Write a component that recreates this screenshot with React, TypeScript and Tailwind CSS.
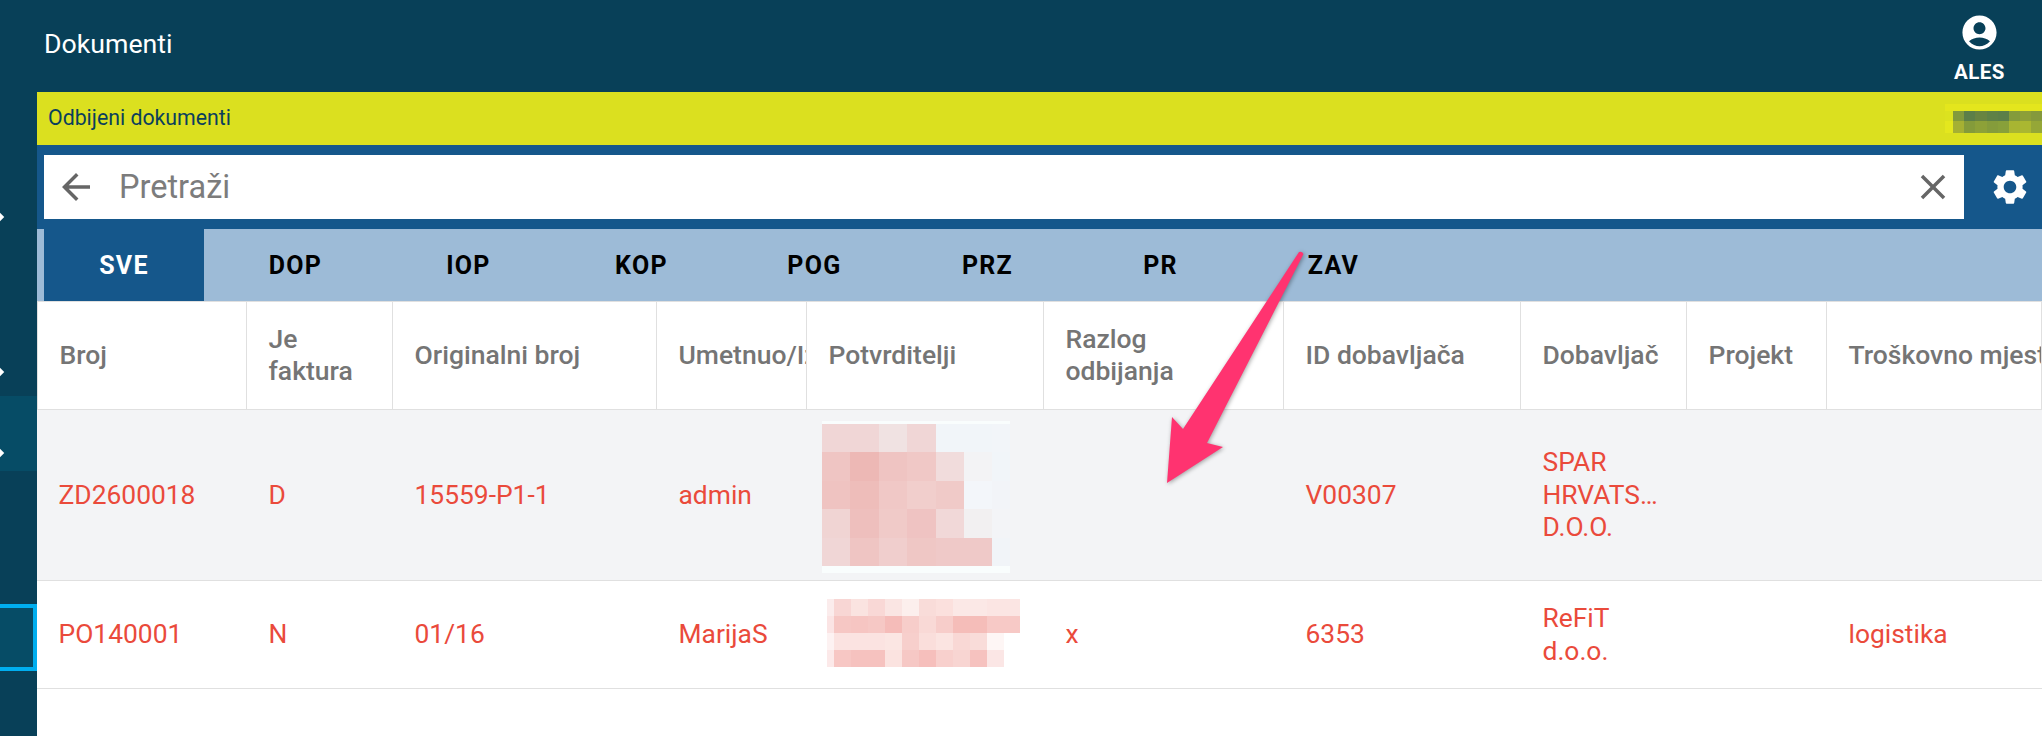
import type { ReactNode } from "react";
import { MdAccountCircle, MdArrowBack, MdClose, MdSettings } from "react-icons/md";

const gridCols =
    "grid grid-cols-[210px_146px_264px_150px_237px_240px_237px_166px_140px_215px]";

const tabs = ["DOP", "IOP", "KOP", "POG", "PRZ", "PR", "ZAV"];

const headers = [
    "Broj",
    "Je faktura",
    "Originalni broj",
    "Umetnuo/Izmijenio",
    "Potvrditelji",
    "Razlog odbijanja",
    "ID dobavljača",
    "Dobavljač",
    "Projekt",
    "Troškovno mjesto",
];

// blurred names, sampled per block
const mosaicOne = [
    ["#f0d6d6", "#f0d6d6", "#f0e2e2", "#f0d6d6", "#f1f5f9", "#f1f5f9", "#f2f5f9"],
    ["#efc5c3", "#edb8b5", "#efc4c2", "#f0c8c6", "#f1dcdc", "#f3f3f5", "#f1f5f9"],
    ["#efc3c1", "#eebdba", "#f0c8c6", "#f1cecc", "#f0cac8", "#f3f6fa", "#f2f4f8"],
    ["#f0d4d3", "#eebfbd", "#f0cac8", "#efc3c2", "#f1d8d8", "#f2f0f1", "#f3f4f7"],
    ["#f0d6d6", "#efc5c3", "#f0cecd", "#efc7c5", "#efc9c8", "#efc9c8", "#f1f4f8"],
];

const mosaicTwo = [
    ["#fbecec", "#f8d6d4", "#fae3e0", "#f9d8d6", "#fae5e3", "#fcefed", "#f9dcd9", "#fbe0dd", "#fbe8e6", "#fbe8e6", "#fbe5e3", "#fbe5e3"],
    ["#fbe4e4", "#f6c7c4", "#f6c5c2", "#f6c8c5", "#f5bcb9", "#f7cdca", "#f9d9d6", "#f7cdca", "#f5bdb9", "#f5bdb9", "#f7c9c6", "#f7c9c6"],
    ["#fdf2f2", "#fbe3e1", "#fbe3e1", "#fbe3e1", "#fbe6e3", "#f7cfcc", "#fadedb", "#fbe4e1", "#f9d8d5", "#f9dcd9", "#fef6f5", "#ffffff"],
    ["#fce9e9", "#f7c7c4", "#f6c2bf", "#f6c2bf", "#fbe3e0", "#f6c8c5", "#f6bfbc", "#f8d0cd", "#f8d5d2", "#f6c2bf", "#fbe6e5", "#ffffff"],
];

const mosaicYellow = [
    ["#dce21f", "#829a3c", "#5c7f48", "#688441", "#5f8146", "#5c7f48", "#849b3b", "#8d9f38", "#85993c"],
    ["#e4e71e", "#a5b033", "#849b3a", "#8da138", "#859c3b", "#88a03a", "#a8b532", "#aab731", "#95a737"],
];

function MosaicOne() {
    return (
        <svg width="188" height="152" shapeRendering="crispEdges" className="block">
            <rect width="188" height="152" fill="#f9fdfd" />
            {mosaicOne.map((row, y) =>
                row.map((color, x) => (
                    <rect
                        key={`${x}-${y}`}
                        x={x * 28.4}
                        y={3 + y * 28.4}
                        width={x === 6 ? 18 : 28.4}
                        height={28.4}
                        fill={color}
                    />
                ))
            )}
        </svg>
    );
}

function MosaicTwo() {
    return (
        <svg width="193" height="68" shapeRendering="crispEdges" className="block">
            <rect x="191" y="17" width="2" height="13" fill="#ea4335" />
            {mosaicTwo.map((row, y) =>
                row.map((color, x) => (
                    <rect
                        key={`${x}-${y}`}
                        x={x === 0 ? 0 : 7 + (x - 1) * 17}
                        y={y * 17}
                        width={x === 0 ? 7 : 17}
                        height={17}
                        fill={color}
                    />
                ))
            )}
        </svg>
    );
}

function MosaicYellow() {
    return (
        <svg width="97" height="29" shapeRendering="crispEdges" className="block">
            <rect width="97" height="7" fill="#e4e61d" />
            {mosaicYellow.map((row, y) =>
                row.map((color, x) => (
                    <rect
                        key={`${x}-${y}`}
                        x={x === 0 ? 0 : 8 + (x - 1) * 11.2}
                        y={y === 0 ? 7 : 17}
                        width={x === 0 ? 8 : 11.2}
                        height={y === 0 ? 10 : 12}
                        fill={color}
                    />
                ))
            )}
        </svg>
    );
}

function Dot() {
    return <div className="h-[6px] w-[6px] -ml-[3px] rotate-45 bg-white" />;
}

function Cell({ children }: { children?: ReactNode }) {
    return (
        <div className="flex min-w-0 items-center overflow-hidden px-[21.5px] text-[26.4px] leading-[32.5px] text-[#ea4a3b]">
            {children}
        </div>
    );
}

export default function App() {
    return (
        <div className="relative flex h-screen w-full flex-col overflow-hidden bg-white font-['Roboto',sans-serif]">
            <header className="flex h-[92px] shrink-0 items-start justify-between bg-[#084058] text-white">
                <h1 className="mt-[25px] ml-[44px] text-[26.7px] leading-[38px] font-normal">Dokumenti</h1>
                <div className="mr-[37px] flex flex-col items-center pt-[12px]">
                    <MdAccountCircle size={41} />
                    <span className="mt-[8px] text-[20.5px] leading-[22px] font-bold tracking-[0.5px]">ALES</span>
                </div>
            </header>

            <div className="flex min-h-0 flex-1">
                <aside className="flex w-[37px] shrink-0 flex-col bg-[#084058]">
                    <div className="mt-[122px]"><Dot /></div>
                    <div className="mt-[149px]"><Dot /></div>
                    <div className="mt-[21px] h-[75px] bg-[#064c66] pt-[54px]"><Dot /></div>
                    <div className="mt-[133px] h-[67px] border-y-[4px] border-r-[4px] border-[#00aeef] bg-[#064c66]" />
                </aside>

                <main className="min-w-0 flex-1">
                    <div className="flex h-[53px] items-center justify-between overflow-hidden bg-[#dbe01f]">
                        <span className="mb-[2px] ml-[11px] text-[21.3px] text-[#0b3f5c]">Odbijeni dokumenti</span>
                        <MosaicYellow />
                    </div>

                    <div className="flex h-[84px] items-center bg-[#15578b] pl-[7px]">
                        <div className="flex h-[64px] w-[1920px] items-center bg-white text-[#666666]">
                            <MdArrowBack size={42} className="ml-[11px] shrink-0" />
                            <span className="ml-[22px] flex-1 text-[32.5px] text-[#7c7c7c]">Pretraži</span>
                            <MdClose size={42} className="mr-[10px] shrink-0" />
                        </div>
                        <MdSettings size={42} className="ml-[25px] shrink-0 text-white" />
                    </div>

                    <div className="flex h-[72px] items-stretch bg-[#9dbbd7] pl-[7px] text-[25px] font-bold tracking-[1.3px] text-black">
                        <div className="flex w-[160px] items-center justify-center bg-[#15578b] pt-[2px] text-white">SVE</div>
                        <div className="ml-[5px] flex">
                            {tabs.map((tab) => (
                                <div key={tab} className="flex w-[173px] items-center justify-center pt-[2px]">
                                    {tab}
                                </div>
                            ))}
                        </div>
                    </div>

                    <div className={`${gridCols} h-[109px] border-y border-[#e0e0e0]`}>
                        {headers.map((header, index) => (
                            <div
                                key={header}
                                className={`flex items-center overflow-hidden border-r border-[#e0e0e0] pb-[2px] pl-[21.5px] text-[26.5px] leading-[32px] font-medium text-[#757575] ${index === 0 ? "border-l" : ""}`}
                            >
                                <span className={header === "Je faktura" || header === "Razlog odbijanja" ? "pr-[22px]" : "whitespace-nowrap"}>
                                    {header}
                                </span>
                            </div>
                        ))}
                    </div>

                    <div className={`${gridCols} h-[171px] border-b border-[#e0e0e0] bg-[#f3f4f6]`}>
                        <Cell>ZD2600018</Cell>
                        <Cell>D</Cell>
                        <Cell>15559-P1-1</Cell>
                        <Cell>admin</Cell>
                        <div className="flex items-center pt-[3px] pl-[15px]"><MosaicOne /></div>
                        <Cell />
                        <Cell>V00307</Cell>
                        <Cell>
                            <div className="min-w-0">
                                <div>SPAR</div>
                                <div className="truncate">HRVATSKA</div>
                                <div>D.O.O.</div>
                            </div>
                        </Cell>
                        <Cell />
                        <Cell />
                    </div>

                    <div className={`${gridCols} h-[108px] border-b border-[#e0e0e0] bg-white`}>
                        <Cell>PO140001</Cell>
                        <Cell>N</Cell>
                        <Cell>01/16</Cell>
                        <Cell>MarijaS</Cell>
                        <div className="flex items-center pb-[4px] pl-[20px]"><MosaicTwo /></div>
                        <Cell>x</Cell>
                        <Cell>6353</Cell>
                        <Cell>
                            <div>
                                <div>ReFiT</div>
                                <div>d.o.o.</div>
                            </div>
                        </Cell>
                        <Cell />
                        <Cell>logistika</Cell>
                    </div>
                </main>
            </div>

            {/* annotation arrow drawn over the page */}
            <svg
                width="2042"
                height="736"
                className="pointer-events-none absolute top-0 left-0 drop-shadow-[1px_1px_2px_rgba(0,0,0,0.35)]"
            >
                <path
                    d="M1299 252 Q1302 251 1303.5 254 L1207 443 L1223 447 L1167 483 L1172 417 L1183 429 Z"
                    fill="#ff3370"
                />
            </svg>
        </div>
    );
}
